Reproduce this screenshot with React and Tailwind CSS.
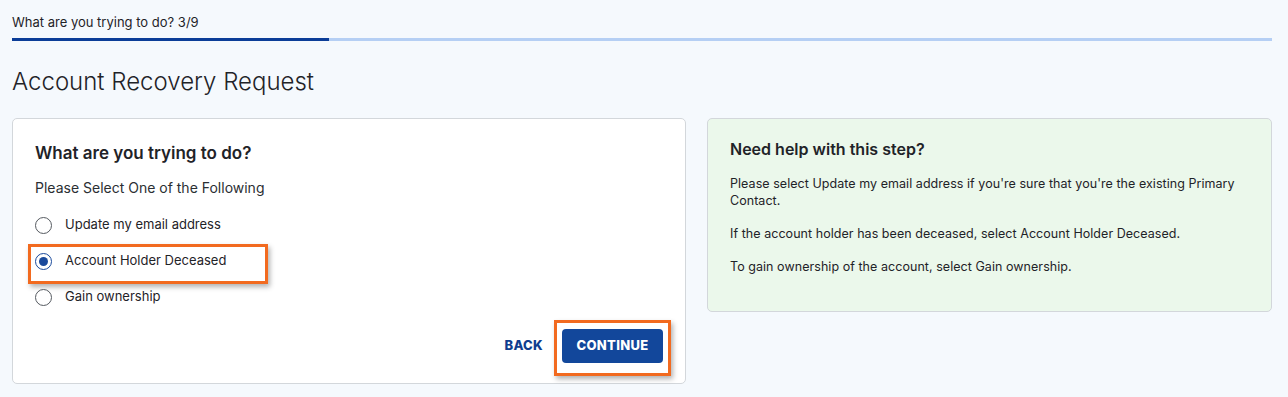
export default function App() {
  const options = [
    { label: "Update my email address", checked: false },
    { label: "Account Holder Deceased", checked: true, highlight: true },
    { label: "Gain ownership", checked: false },
  ];
  return (
    <div className="w-[1288px] h-[397px] bg-[#f5f9fd] overflow-hidden px-3 text-[#1f2328]" style={{ fontFamily: "Inter, 'Noto Sans', sans-serif" }}>
      <div className="pt-[14px] text-[13px] leading-[16px] text-[#1f2328]">What are you trying to do? 3/9</div>
      <div className="mt-[8px] flex h-[3px] w-[1260px]">
        <div className="w-[317px] bg-[#0b3d98]"></div>
        <div className="flex-1 bg-[#b5cff4]"></div>
      </div>
      <h1 className="mt-[25px] text-[24px] leading-[32px] font-light text-[#1f2328]">Account Recovery Request</h1>
      <div className="mt-[20px] flex gap-[21px] items-start">
        <div className="w-[674px] h-[266px] bg-white border border-[#d3d7db] rounded-[5px] px-[22px] pt-[21px] flex flex-col">
          <h2 className="text-[17px] leading-[26px] font-semibold text-[#1f2328]">What are you trying to do?</h2>
          <p className="mt-[12px] text-[14px] leading-[20px] text-[#2b2f33]">Please Select One of the Following</p>
          <div className="mt-[9px] flex flex-col">
            {options.map((o) => (
              <div key={o.label} className="relative flex items-center h-[36px] gap-[13px]">
                {o.highlight && (
                  <div className="absolute left-[-7px] top-[1px] w-[240px] h-[40px] border-[3px] border-[#f26a1f] shadow-[2px_3px_5px_rgba(0,0,0,0.3)]"></div>
                )}
                <span className={"w-[17px] h-[17px] rounded-full border flex items-center justify-center bg-white " + (o.checked ? "border-[#1a4a9c]" : "border-[#555a60]")}>
                  {o.checked && <span className="w-[9px] h-[9px] rounded-full bg-[#1a4a9c]"></span>}
                </span>
                <span className="relative text-[13px] text-[#1f2328]">{o.label}</span>
              </div>
            ))}
          </div>
          <div className="mt-auto mb-[20px] flex justify-end items-center gap-[19px] pr-[0px]">
            <span className="text-[13px] font-extrabold tracking-[0.3px] text-[#0f3d8f]">BACK</span>
            <div className="relative">
              <div className="absolute left-[-8px] top-[-9px] w-[117px] h-[56px] border-[3px] border-[#f26a1f] shadow-[2px_3px_5px_rgba(0,0,0,0.3)]"></div>
              <button className="relative w-[101px] h-[34px] rounded-[4px] bg-[#12479b] text-white text-[13px] font-extrabold tracking-[0.3px]">CONTINUE</button>
            </div>
          </div>
        </div>
        <div className="w-[565px] h-[194px] bg-[#ebf8eb] border border-[#d3d7db] rounded-[5px] px-[22px] pt-[19px]">
          <h3 className="text-[16px] leading-[22px] font-semibold text-[#1f2328]">Need help with this step?</h3>
          <p className="mt-[15px] text-[12.5px] leading-[17px] tracking-[0.05px] text-[#1f2328]">Please select Update my email address if you're sure that you're the existing Primary Contact.</p>
          <p className="mt-[16px] text-[12.5px] leading-[17px] tracking-[0.05px] text-[#1f2328]">If the account holder has been deceased, select Account Holder Deceased.</p>
          <p className="mt-[16px] text-[12.5px] leading-[17px] tracking-[0.05px] text-[#1f2328]">To gain ownership of the account, select Gain ownership.</p>
        </div>
      </div>
    </div>
  );
}
